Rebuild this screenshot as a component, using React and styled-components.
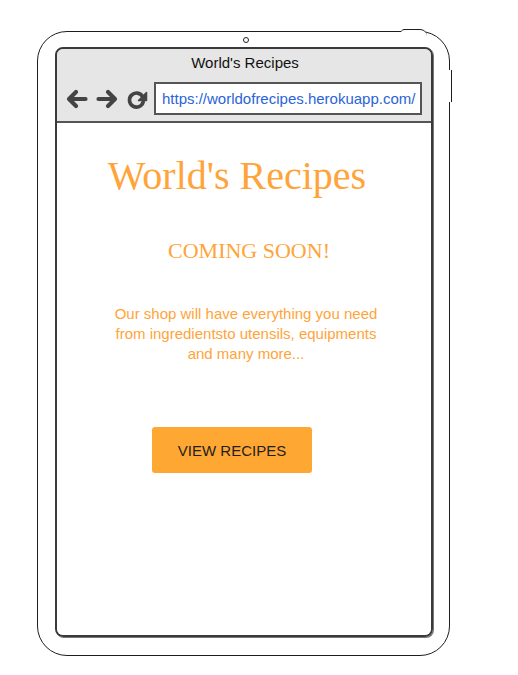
import React from "react";
import styled, { createGlobalStyle } from "styled-components";

const Global = createGlobalStyle`
  html, body { margin: 0; padding: 0; background: #fff; }
  body { font-family: "Liberation Sans", Arial, sans-serif; }
`;

const Page = styled.div`
  width: 518px;
  height: 675px;
  padding: 31px 0 0 37px;
  box-sizing: border-box;
`;

const Tablet = styled.div`
  position: relative;
  width: 413px;
  height: 625px;
  box-sizing: border-box;
  border: 1.5px solid #1e1e1e;
  border-radius: 30px;
  padding: 15px 16px 18px 17px;
  display: flex;
  &::before {
    content: "";
    position: absolute;
    top: -3px;
    right: 22px;
    width: 26px;
    height: 6px;
    border-top: 1.5px solid #1e1e1e;
    border-radius: 4px 8px 0 0;
    background: #fff;
  }
  &::after {
    content: "";
    position: absolute;
    top: 38px;
    right: -2.5px;
    width: 2px;
    height: 32px;
    border-right: 1.5px solid #1e1e1e;
    background: #fff;
  }
`;

const Camera = styled.div`
  position: absolute;
  top: 5px;
  left: 205px;
  width: 4px;
  height: 4px;
  border: 1.5px solid #222;
  border-radius: 50%;
`;

const Screen = styled.div`
  flex: 1;
  display: flex;
  flex-direction: column;
  border: 2px solid #3a3a3a;
  border-radius: 8px;
  box-shadow: inset 2px 0 0 #9a9a9a, inset -2px 0 0 #9a9a9a, 1px 1px 0 #777;
  overflow: hidden;
`;

const BrowserBar = styled.div`
  background: #e6e6e6;
  border-bottom: 2px solid #555;
  height: 74px;
  box-sizing: border-box;
  display: flex;
  flex-direction: column;
`;

const Title = styled.div`
  font-size: 15px;
  color: #111;
  text-align: center;
  padding-top: 5px;
  padding-left: 2px;
  line-height: 17px;
`;

const NavRow = styled.div`
  display: flex;
  align-items: center;
  margin-top: 11px;
  padding-left: 9px;
`;

const NavIcon = styled.svg`
  width: 22px;
  height: 22px;
  margin-right: ${(p) => p.$gap || 8}px;
  flex: none;
`;

const UrlBox = styled.div`
  width: 268px;
  height: 33px;
  box-sizing: border-box;
  background: #fff;
  border: 2px solid #555;
  display: flex;
  align-items: center;
  padding-left: 6px;
  font-size: 15px;
  color: #2a64d8;
  white-space: nowrap;
  overflow: hidden;
`;

const Content = styled.div`
  flex: 1;
  background: #fff;
  display: flex;
  flex-direction: column;
  align-items: center;
`;

const Heading = styled.h1`
  margin: 29px 0 0 -14px;
  font-family: "Liberation Serif", "Times New Roman", serif;
  font-weight: normal;
  font-size: 40px;
  line-height: 48px;
  color: #ffa43a;
`;

const Sub = styled.h2`
  margin: 38px 0 0 10px;
  font-family: "Liberation Serif", "Times New Roman", serif;
  font-weight: normal;
  font-size: 22px;
  line-height: 26px;
  color: #ffa43a;
`;

const Blurb = styled.p`
  margin: 40px 0 0 4px;
  font-size: 15px;
  line-height: 20px;
  text-align: center;
  color: #ffa43a;
`;

const Button = styled.button`
  margin: 63px 0 0 -24px;
  width: 160px;
  height: 46px;
  background: #ffa733;
  border: none;
  border-radius: 3px;
  font-family: "Liberation Sans", Arial, sans-serif;
  font-size: 15px;
  color: #1e1e1e;
  cursor: pointer;
`;

const Back = () => (
  <NavIcon viewBox="0 0 22 22">
    <path d="M19.5 11H3.5M10 4L3 11L10 18" fill="none" stroke="#444" strokeWidth="4.2" strokeLinecap="round" strokeLinejoin="round" />
  </NavIcon>
);

const Forward = () => (
  <NavIcon viewBox="0 0 22 22">
    <path d="M2.5 11H18.5M12 4L19 11L12 18" fill="none" stroke="#444" strokeWidth="4.2" strokeLinecap="round" strokeLinejoin="round" />
  </NavIcon>
);

const Refresh = () => (
  <NavIcon viewBox="0 0 22 22" $gap={6}>
    <path d="M16.5 8.5A7 7 0 1 0 17.2 14" fill="none" stroke="#444" strokeWidth="3.6" strokeLinecap="round" />
    <path d="M12.5 12.5L20.5 12.5L20.5 4.5Z" fill="#444" stroke="#444" strokeWidth="1.5" strokeLinejoin="round" />
  </NavIcon>
);

export default function App() {
  return (
    <>
      <Global />
      <Page>
        <Tablet>
          <Camera />
          <Screen>
            <BrowserBar>
              <Title>World's Recipes</Title>
              <NavRow>
                <Back />
                <Forward />
                <Refresh />
                <UrlBox>https://worldofrecipes.herokuapp.com/</UrlBox>
              </NavRow>
            </BrowserBar>
            <Content>
              <Heading>World's Recipes</Heading>
              <Sub>COMING SOON!</Sub>
              <Blurb>
                Our shop will have everything you need
                <br />
                from ingredientsto utensils, equipments
                <br />
                and many more...
              </Blurb>
              <Button>VIEW RECIPES</Button>
            </Content>
          </Screen>
        </Tablet>
      </Page>
    </>
  );
}
